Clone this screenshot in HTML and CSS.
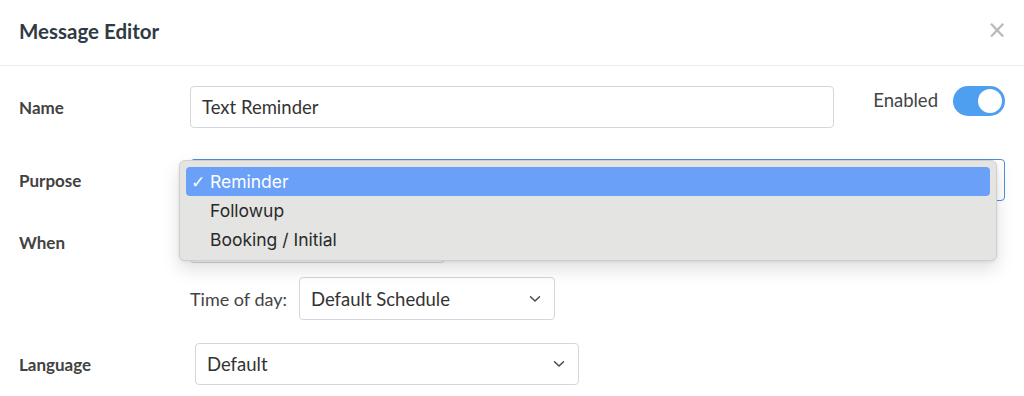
FILE: index.html
```html
<!DOCTYPE html>
<html>
<head>
<meta charset="utf-8">
<link rel="stylesheet" href="styles.css">
</head>
<body>
<div class="modal">
  <div class="modal-header">
    <h1 class="title">Message Editor</h1>
    <span class="close">&times;</span>
  </div>
  <div class="modal-body">
    <div class="row row-name">
      <label class="label">Name</label>
      <div class="input name-input">Text Reminder</div>
      <div class="enabled">
        <span class="enabled-text">Enabled</span>
        <span class="toggle"><span class="knob"></span></span>
      </div>
    </div>
    <div class="row row-purpose">
      <label class="label">Purpose</label>
      <div class="purpose-wrap">
        <div class="input purpose-select"></div>
        <div class="popup">
          <div class="opt opt-active"><span class="check">✓</span>Reminder</div>
          <div class="opt">Followup</div>
          <div class="opt">Booking / Initial</div>
        </div>
      </div>
    </div>
    <div class="row row-when">
      <label class="label">When</label>
      <div class="when-col">
        <div class="input when-select"></div>
        <div class="tod">
          <span class="tod-label">Time of day:</span>
          <div class="input select tod-select">Default Schedule<svg class="chev" width="12" height="8" viewBox="0 0 12 8"><path d="M1.5 1.8 L6 6 L10.5 1.8" fill="none" stroke="#444" stroke-width="1.4" stroke-linecap="round" stroke-linejoin="round"/></svg></div>
        </div>
      </div>
    </div>
    <div class="row row-lang">
      <label class="label">Language</label>
      <div class="input select lang-select">Default<svg class="chev" width="12" height="8" viewBox="0 0 12 8"><path d="M1.5 1.8 L6 6 L10.5 1.8" fill="none" stroke="#444" stroke-width="1.4" stroke-linecap="round" stroke-linejoin="round"/></svg></div>
    </div>
  </div>
</div>
</body>
</html>
```
FILE: styles.css
```css
* { box-sizing: border-box; }
html, body { margin: 0; padding: 0; background: #fff; }
body { font-family: Lato, "Open Sans", sans-serif; color: #333; width: 1024px; height: 396px; overflow: hidden; }
.modal { width: 1024px; }
.modal-header {
  height: 66px;
  padding: 0 19px;
  display: flex;
  align-items: center;
  justify-content: space-between;
  border-bottom: 1px solid #ebebeb;
}
.title { margin: 0; font-size: 20.5px; font-weight: 700; color: #2f3a45; margin-top: -4px; }
.close { font-size: 24px; color: #b8b8b8; margin-right: -2px; margin-top: -6px; font-family: "DejaVu Sans", sans-serif; }
.modal-body { padding: 20px 19px 0 19px; }
.row { display: flex; align-items: center; }
.label { width: 171px; flex: none; font-size: 17px; font-weight: 700; color: #424242; }
.input {
  height: 42px;
  border: 1px solid #d3d6de;
  border-radius: 4px;
  background: #fff;
  font-size: 18.5px;
  color: #333;
  display: flex;
  align-items: center;
  padding: 0 11px;
}
.name-input { width: 644px; }
.enabled { display: flex; align-items: center; margin-left: auto; align-self: flex-start; }
.enabled-text { font-size: 18.5px; color: #444; margin-right: 15px; margin-top: -3px; }
.toggle {
  width: 52px; height: 30px; border-radius: 15px; background: #4e9ff0;
  display: flex; align-items: center; justify-content: flex-end; padding-right: 3px;
}
.knob { width: 24px; height: 24px; border-radius: 50%; background: #fff; }
.row-purpose { margin-top: 31px; }
.purpose-wrap { position: relative; flex: 1; }
.purpose-select { width: 815px; border-color: #4c8fdc; }
.popup {
  position: absolute;
  left: -11px; top: 1px;
  width: 818px; height: 101px;
  background: #e4e4e2;
  border: 1px solid #cfcfcd;
  border-radius: 6px;
  box-shadow: 0 8px 18px rgba(0,0,0,0.13), 0 1px 3px rgba(0,0,0,0.08);
  padding: 6px 6px;
  font-family: Inter, "Open Sans", sans-serif;
  z-index: 5;
}
.opt { height: 29px; display: flex; align-items: center; padding-left: 24px; font-size: 17.5px; color: #2a2a2a; }
.opt-active { background: #6aa0f7; color: #fff; border-radius: 4px; padding-left: 5px; }
.check { width: 19px; font-size: 17px; font-family: "DejaVu Sans", sans-serif; }
.row-when { margin-top: 20px; align-items: flex-start; }
.row-when .label { margin-top: 11px; }
.when-col { display: flex; flex-direction: column; }
.when-select { width: 255px; }
.tod { display: flex; align-items: center; margin-top: 14px; }
.tod-label { font-size: 18px; color: #444; width: 109px; }
.select { justify-content: space-between; padding-right: 13px; }
.tod-select { width: 256px; height: 43px; }
.row-lang { margin-top: 23px; }
.lang-select { width: 384px; margin-left: 5px; }
.chev { flex: none; }
```
